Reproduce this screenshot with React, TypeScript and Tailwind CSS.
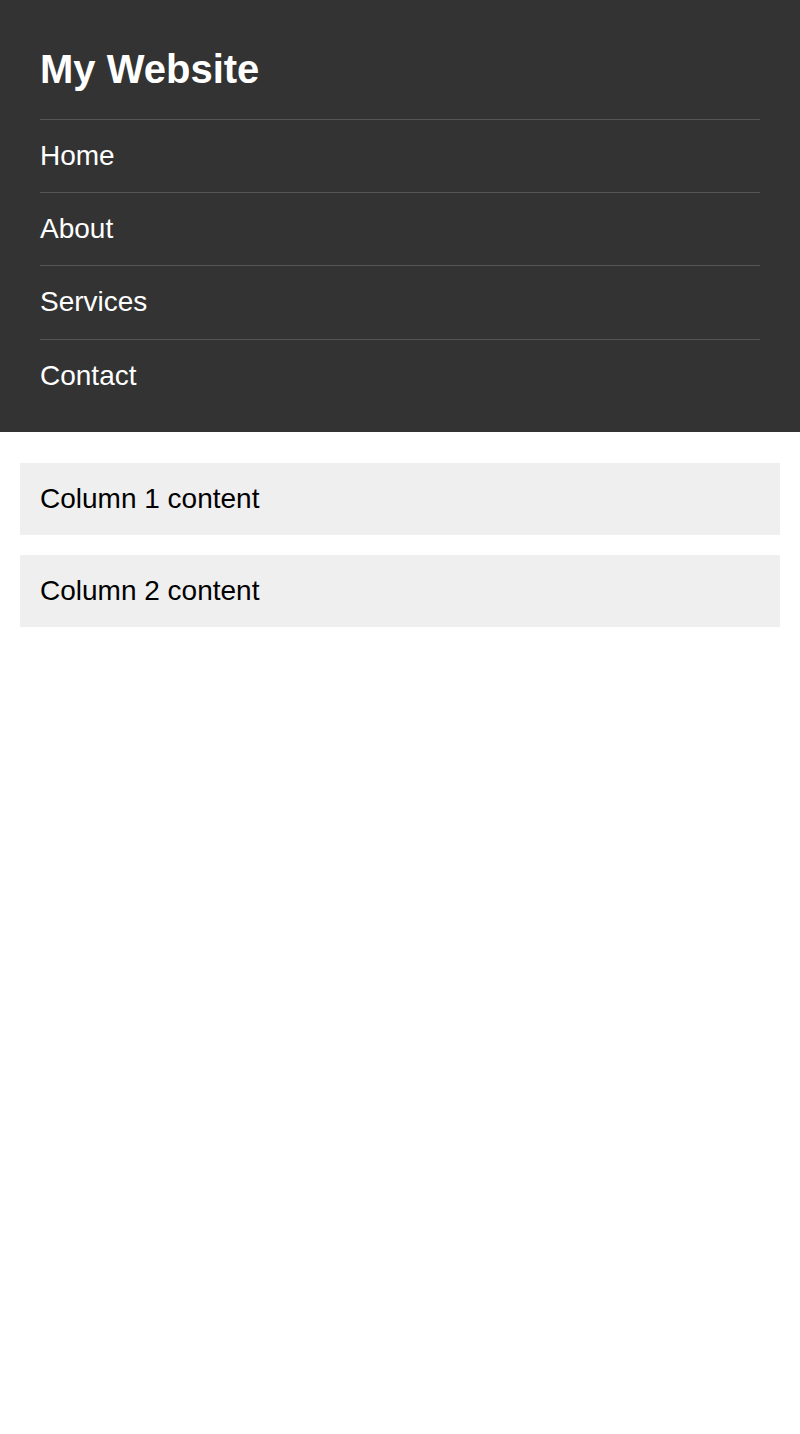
export default function App() {
  const items = ["Home", "About", "Services", "Contact"];
  return (
    <div className="min-h-[1434px] bg-white" style={{ fontFamily: '"Liberation Sans", Arial, sans-serif' }}>
      <header className="bg-[#333333] px-10 pt-5 pb-5 text-white">
        <h1 className="my-[26.8px] text-[40px] font-bold leading-[normal]">My Website</h1>
        <ul>
          {items.map((it) => (
            <li key={it} className="border-t border-[#555555] py-5 text-[28px] leading-[32.33px]">
              {it}
            </li>
          ))}
        </ul>
      </header>
      <main className="flex flex-col gap-5 px-5 pt-[31px]">
        <div className="bg-[#efefef] p-5 text-[28px] leading-[32px] text-black">Column 1 content</div>
        <div className="bg-[#efefef] p-5 text-[28px] leading-[32px] text-black">Column 2 content</div>
      </main>
    </div>
  );
}
